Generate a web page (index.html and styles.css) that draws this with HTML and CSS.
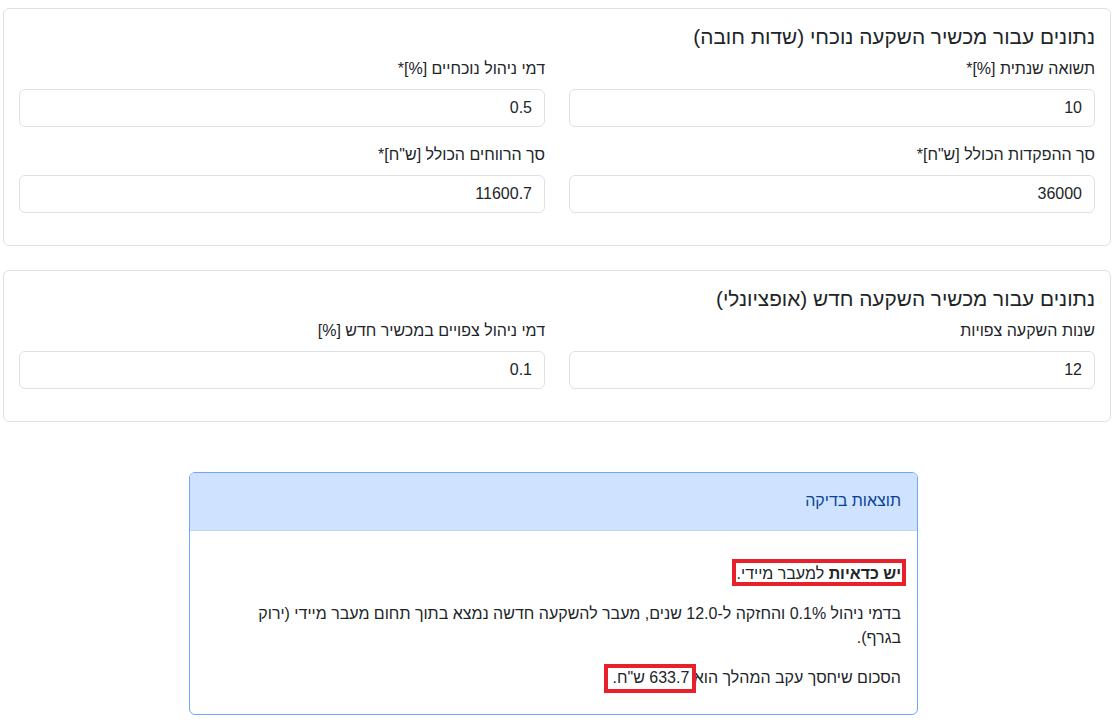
FILE: index.html
```html
<!DOCTYPE html>
<html lang="he" dir="rtl">
<head>
<meta charset="utf-8">
<title>בדיקת כדאיות מעבר</title>
<link rel="stylesheet" href="styles.css">
</head>
<body>
<main class="page">
  <section class="card">
    <div class="card-body">
      <h5 class="card-title">נתונים עבור מכשיר השקעה נוכחי (שדות חובה)</h5>
      <div class="grid">
        <div class="field">
          <label class="label">תשואה שנתית [%]*</label>
          <input class="input" type="text" value="10">
        </div>
        <div class="field">
          <label class="label">דמי ניהול נוכחיים [%]*</label>
          <input class="input" type="text" value="0.5">
        </div>
        <div class="field">
          <label class="label">סך ההפקדות הכולל [ש"ח]*</label>
          <input class="input" type="text" value="36000">
        </div>
        <div class="field">
          <label class="label">סך הרווחים הכולל [ש"ח]*</label>
          <input class="input" type="text" value="11600.7">
        </div>
      </div>
    </div>
  </section>

  <section class="card">
    <div class="card-body">
      <h5 class="card-title">נתונים עבור מכשיר השקעה חדש (אופציונלי)</h5>
      <div class="grid">
        <div class="field">
          <label class="label">שנות השקעה צפויות</label>
          <input class="input" type="text" value="12">
        </div>
        <div class="field">
          <label class="label">דמי ניהול צפויים במכשיר חדש [%]</label>
          <input class="input" type="text" value="0.1">
        </div>
      </div>
    </div>
  </section>

  <div class="result-row">
    <section class="result">
      <div class="result-header">תוצאות בדיקה</div>
      <div class="result-body">
        <p class="para"><span class="mark mark-a"><strong>יש כדאיות</strong> למעבר מיידי.</span></p>
        <p class="para">בדמי ניהול 0.1% והחזקה ל-12.0 שנים, מעבר להשקעה חדשה נמצא בתוך תחום מעבר מיידי (ירוק בגרף).</p>
        <p class="para">הסכום שיחסך עקב המהלך הוא <span class="mark mark-b">633.7 ש"ח.</span></p>
      </div>
    </section>
  </div>
</main>
</body>
</html>
```
FILE: styles.css
```css
* { box-sizing: border-box; }

html, body {
  margin: 0;
  padding: 0;
  background: #fff;
}

body {
  font-family: "Liberation Sans", "Open Sans", "DejaVu Sans", sans-serif;
  font-size: 16px;
  line-height: 1.5;
  color: #212529;
}

.page {
  padding: 8px 4px 0 3px;
}

.card {
  border: 1px solid #dee2e6;
  border-radius: 6px;
  margin-bottom: 24px;
}

.card-body {
  padding: 16px 15px 0 15px;
}

.card-title {
  margin: 0 0 8px 0;
  font-size: 20.8px;
  font-weight: 500;
  line-height: 24px;
}

.grid {
  display: grid;
  grid-template-columns: 1fr 1fr;
  column-gap: 24px;
  padding-bottom: 16px;
}

.field {
  margin-bottom: 16px;
}

.label {
  display: block;
  margin-bottom: 8px;
  font-size: 16px;
}

.input {
  display: block;
  width: 100%;
  height: 38px;
  padding: 6px 12px;
  font: inherit;
  color: #212529;
  background: #fff;
  border: 1px solid #dee2e6;
  border-radius: 6px;
  direction: rtl;
  text-align: right;
}

.result-row {
  display: flex;
  justify-content: flex-start;
  padding-top: 26px;
  padding-right: 193px;
}

.result {
  width: 729px;
  border: 1px solid #6ea8fe;
  border-radius: 6px;
  overflow: hidden;
}

.result-header {
  background: #cfe2ff;
  color: #084298;
  padding: 16px;
  height: 58px;
  border-bottom: 1px solid #c3d7f5;
}

.result-body {
  padding: 31px 16px 8px 22px;
}

.para {
  margin: 0 0 16px 0;
}

.mark {
  position: relative;
  display: inline-block;
  line-height: 24px;
}

.mark::after {
  content: "";
  position: absolute;
  border: 4px solid #e8202a;
  pointer-events: none;
}

.mark-a::after {
  top: -3px;
  bottom: 0;
  left: -5px;
  right: -5px;
}

.mark-b::after {
  top: -2px;
  bottom: -3px;
  left: -8px;
  right: -7px;
}
```
